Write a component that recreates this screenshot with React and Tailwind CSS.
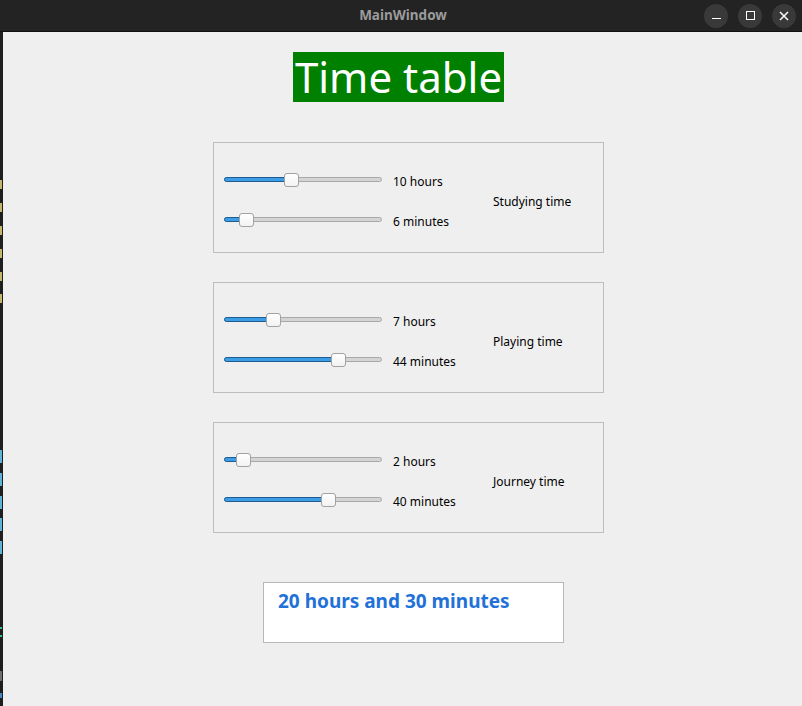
const GROUPS = [
  { hours: 10, minutes: 6, label: 'Studying time' },
  { hours: 7, minutes: 44, label: 'Playing time' },
  { hours: 2, minutes: 40, label: 'Journey time' },
]

// bits of the terminal window peeking out behind the left edge
const MARKS = [
  [148, 9, '#c2b76a'],
  [14, 9, '#c2b76a'],
  [14, 9, '#c2b76a'],
  [14, 9, '#c2b76a'],
  [14, 9, '#c2b76a'],
  [13, 9, '#c2b76a'],
  [147, 13, '#5db4d6'],
  [10, 13, '#5db4d6'],
  [10, 13, '#5db4d6'],
  [9, 13, '#5db4d6'],
  [10, 13, '#5db4d6'],
  [73, 2, '#2fc48e'],
  [6, 2, '#2fc48e'],
  [34, 10, '#6f6f6f'],
  [12, 5, '#4a86c6'],
]

const TRACK = 158
const HANDLE = 15

function Slider({ value, max }) {
  const left = Math.round((value / max) * (TRACK - HANDLE))
  return (
    <div className="relative h-[16px] w-[158px] shrink-0">
      <div className="absolute left-0 right-0 top-[5px] h-[5px] rounded-full border border-[#a8a8a8] bg-[#d4d4d4]" />
      <div
        className="absolute left-0 top-[5px] h-[5px] rounded-full border border-[#1d5d93] bg-[#3d9de4]"
        style={{ width: left + 8 }}
      />
      <div
        className="absolute top-[1px] h-[14px] w-[15px] rounded-[3px] border border-[#a2a2a2] bg-gradient-to-b from-white to-[#f2f2f2]"
        style={{ left }}
      />
    </div>
  )
}

function TimeGroup({ group }) {
  return (
    <div className="ml-[210px] flex h-[111px] w-[391px] border border-[#bdbdbd] pl-[10px] pt-[29px]">
      <div className="flex flex-col gap-[24px]">
        <div className="flex h-[16px] items-start">
          <Slider value={group.hours} max={24} />
          <span className="ml-[11px] mt-[2px] w-[100px] text-[12px] leading-[16px]">{group.hours} hours</span>
        </div>
        <div className="flex h-[16px] items-start">
          <Slider value={group.minutes} max={59} />
          <span className="ml-[11px] mt-[2px] w-[100px] text-[12px] leading-[16px]">{group.minutes} minutes</span>
        </div>
      </div>
      <div className="flex h-[56px] items-center pt-[4px] text-[12px] leading-[16px]">{group.label}</div>
    </div>
  )
}

function TitleBar() {
  return (
    <div className="relative flex h-[32px] shrink-0 items-center justify-end border-b border-[#111] bg-[#232323] pr-[6px]">
      <div className="absolute inset-0 flex items-center justify-center pl-[4px] font-['Noto_Sans',sans-serif] text-[13.5px] font-bold text-[#9b9b9b]">
        MainWindow
      </div>
      <div className="relative flex gap-[10px]">
        <button type="button" className="flex h-[24px] w-[24px] items-center justify-center rounded-full bg-[#393939]">
          <span className="mt-[6px] h-[1.5px] w-[9px] bg-white" />
        </button>
        <button type="button" className="flex h-[24px] w-[24px] items-center justify-center rounded-full bg-[#393939]">
          <span className="h-[9px] w-[9px] border-[1.5px] border-white" />
        </button>
        <button type="button" className="flex h-[24px] w-[24px] items-center justify-center rounded-full bg-[#393939]">
          <svg width="10" height="10" viewBox="0 0 10 10" stroke="white" strokeWidth="1.5">
            <path d="M1 1L9 9M9 1L1 9" />
          </svg>
        </button>
      </div>
    </div>
  )
}

export default function App() {
  return (
    <div className="flex h-[706px] w-[802px] flex-col overflow-hidden bg-[#1e1e1e] font-['Noto_Sans',sans-serif] text-black">
      <TitleBar />
      <div className="flex flex-1">
        <div className="flex w-[3px] shrink-0 flex-col">
          {MARKS.map(([gap, h, color], i) => (
            <div key={i} className="w-[2px]" style={{ marginTop: gap, height: h, backgroundColor: color }} />
          ))}
        </div>
        <div className="flex flex-1 flex-col bg-[#efefef]">
          <div className="ml-[290px] mt-[20px] flex h-[50px] w-[211px] items-center justify-center overflow-visible whitespace-nowrap bg-[#008000] text-[42px] leading-[50px] text-white">
            Time table
          </div>
          <div className="mt-[40px] flex flex-col gap-[29px]">
            {GROUPS.map((group) => (
              <TimeGroup key={group.label} group={group} />
            ))}
          </div>
          <div className="ml-[260px] mt-[49px] h-[61px] w-[301px] border border-[#b8b8b8] bg-white pl-[14px] pt-[5px]">
            <p className="text-[19px] font-bold leading-[26px] text-[#2271d8]">20 hours and 30 minutes</p>
          </div>
        </div>
      </div>
    </div>
  )
}
